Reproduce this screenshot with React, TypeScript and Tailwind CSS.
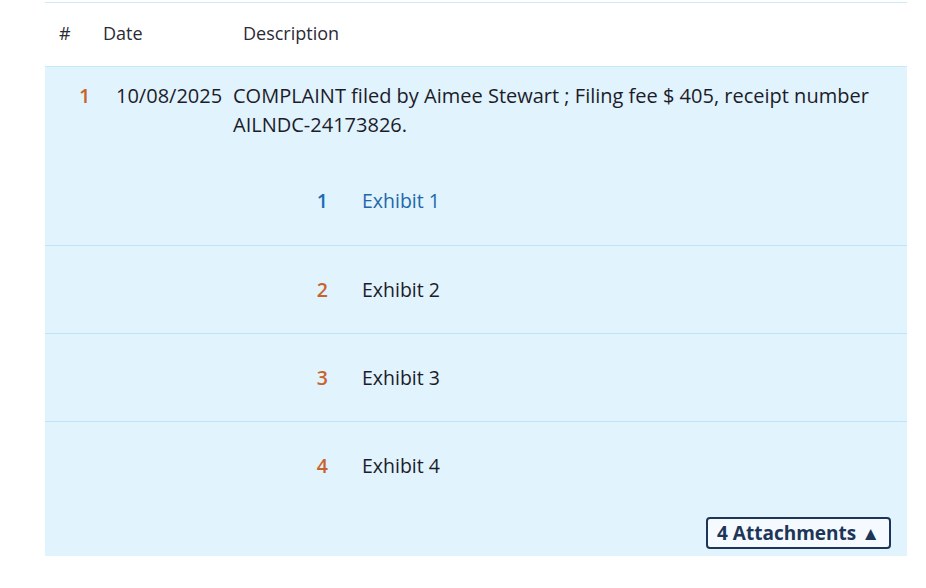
import React from 'react';

const exhibits = [
    { n: 1, label: 'Exhibit 1', active: true },
    { n: 2, label: 'Exhibit 2', active: false },
    { n: 3, label: 'Exhibit 3', active: false },
    { n: 4, label: 'Exhibit 4', active: false },
];

const App: React.FC = () => {
    return (
        <div className="w-[926px] h-[588px] bg-white pl-[45px] pr-[19px] pt-[2px] text-[20px] text-[#1c1c2a]" style={{ fontFamily: '"Open Sans", Lato, sans-serif' }}>
            <div className="border-t border-[#cdebf8]">
                {/* header */}
                <div className="h-[64px] flex items-center pb-[3px] text-[18px] text-[#2b2b35] border-b border-[#c6e8f8]">
                    <div className="w-[58px] pl-[14px]">#</div>
                    <div className="w-[140px]">Date</div>
                    <div>Description</div>
                </div>

                <div className="bg-[#e1f3fd] h-[489px] flex flex-col">
                    {/* docket entry */}
                    <div className="flex pt-[14px] leading-[29px]">
                        <div className="w-[71px] pl-[34px] text-[#c8632c] font-semibold">1</div>
                        <div className="w-[117px]">10/08/2025</div>
                        <div className="flex-1 pr-[30px]">COMPLAINT filed by Aimee Stewart ; Filing fee $ 405, receipt number AILNDC-24173826.</div>
                    </div>

                    {/* attachments */}
                    <div className="mt-[18px] text-[19.5px]">
                        {exhibits.map((e, i) => (
                            <div key={e.n} className={`h-[88px] flex items-center ${i > 0 ? 'border-t border-[#bde5f7]' : ''}`}>
                                <div className={`w-[283px] text-right font-semibold ${e.active ? 'text-[#1b6cb3]' : 'text-[#c8632c]'}`}>{e.n}</div>
                                <div className={`ml-[34px] ${e.active ? 'text-[#1f67ab]' : ''}`}>{e.label}</div>
                            </div>
                        ))}
                    </div>

                    <div className="flex justify-end pr-[16px] mt-[8px]">
                        <button className="h-[32px] px-[9px] border-2 border-[#1d3557] rounded-[4px] bg-[#f4faff] text-[#1d3557] font-bold text-[19px] leading-none">
                            4 Attachments ▲
                        </button>
                    </div>
                </div>
            </div>
        </div>
    );
};

export default App;
